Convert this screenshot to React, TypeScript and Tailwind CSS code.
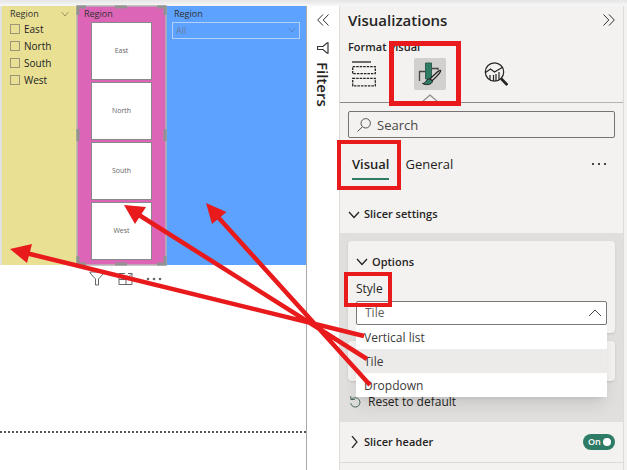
import React from "react";

const regions = ["East", "North", "South", "West"];
const styles = ["Vertical list", "Tile", "Dropdown"];

type StrokeProps = { className: string; points: string; box?: string; width?: number };

function Stroke({ className, points, box = "0 0 12 12", width = 1 }: StrokeProps) {
  return (
    <svg className={className} viewBox={box} fill="none" stroke="currentColor" strokeWidth={width} aria-hidden="true">
      <polyline points={points} />
    </svg>
  );
}

function Highlight({ className }: { className: string }) {
  return <span aria-hidden="true" className={`pointer-events-none absolute z-20 border-[#e81a1c] ${className}`} />;
}

function DoubleChevron({ flip = false }: { flip?: boolean }) {
  return (
    <svg className={flip ? "h-3 w-3 rotate-180" : "h-3 w-3"} viewBox="0 0 12 12" fill="none" stroke="#333" aria-hidden="true">
      <path d="M6 .5.7 6 6 11.500M11.500.5 6.200 6l5.300 5.500" />
    </svg>
  );
}

function SelectionHandles() {
  return (
    <svg className="pointer-events-none absolute -inset-px h-[261px] w-[91px]" viewBox="0 0 91 261" fill="none" aria-hidden="true">
      <rect x="1" y="1" width="89" height="259" stroke="#b4b4b4" strokeWidth="1.500" />
      <path
        d="M2 10V2h8M39 2h12M81 2h8v8M2 124v12M89 124v12M2 251v8h8M39 259h12M81 259h8v-8"
        stroke="#929292"
        strokeWidth="3"
      />
    </svg>
  );
}

function Canvas() {
  return (
    <main className="min-w-0 flex-1 border-r border-[#a9a9a9] bg-white">
      <div className="flex h-[259px] border-l-2 border-[#e1e1e1] text-[9px] text-[#303030]">
        <div role="group" aria-labelledby="region-list" className="w-[75px] shrink-0 bg-[#e9e094] pl-2">
          <div className="flex h-[14px] items-center justify-between pr-2 pt-0.5">
            <span id="region-list">Region</span>
            <Stroke className="h-2 w-2 text-[#77714a]" points="1,3 6,9 11,3" />
          </div>
          {regions.map((name) => (
            <label key={name} className="flex h-[17px] items-center gap-1 text-[10px] leading-4 text-[#222]">
              <input type="checkbox" className="h-[10px] w-[10px] appearance-none border border-[#99967a]" />
              {name}
            </label>
          ))}
        </div>
        <section className="relative w-[89px] shrink-0 bg-[#dd65b7] px-[14px]">
          <h2 className="-ml-[7px] h-4 leading-4">Region</h2>
          <div className="flex flex-col gap-0.5">
            {regions.map((name) => (
              <button
                key={name}
                type="button"
                className="flex h-[58px] w-full items-center justify-center border border-[#898989] bg-white text-[7px] text-[#666]"
              >
                {name}
              </button>
            ))}
          </div>
          <SelectionHandles />
        </section>
        <section className="min-w-0 flex-1 bg-[#5da2ff] px-1.5">
          <label htmlFor="region-drop" className="ml-0.5 block h-4 leading-4">
            Region
          </label>
          <div className="relative">
            <select
              id="region-drop"
              className="block h-[17px] w-full appearance-none border border-[#b4d1fb] px-[3px] text-[9px] leading-[15px] text-[#667da3]"
            >
              <option>All</option>
            </select>
            <Stroke className="absolute right-1 top-1 h-2 w-2 text-[#4f76ac]" points="1,3 6,9 11,3" />
          </div>
        </section>
      </div>
      <div className="flex h-[27px] items-center gap-[13px] pl-[89px] text-[#666]">
        <svg className="h-[15px] w-4" viewBox="0 0 16 15" fill="none" stroke="currentColor" aria-hidden="true">
          <path d="M1 1h14v1L9.500 8v6h-3V8L1 2z" />
        </svg>
        <svg className="h-[14px] w-[15px]" viewBox="0 0 15 14" fill="none" stroke="currentColor" aria-hidden="true">
          <path d="M7 1.500H1v11h13V8M1 7.500h7v5M10 1.500h4v4M14 1.500 9 6.500M9 3.500v3h3" />
        </svg>
        <svg className="h-1 w-4" viewBox="0 0 16 4" fill="currentColor" aria-hidden="true">
          <circle cx="2" cy="2" r="1.300" />
          <circle cx="8" cy="2" r="1.300" />
          <circle cx="14" cy="2" r="1.300" />
        </svg>
      </div>
      <div className="mt-[139px] border-t-2 border-dotted border-[#555]" />
    </main>
  );
}

function FiltersPane() {
  return (
    <aside className="flex w-8 shrink-0 flex-col items-center bg-white pt-2">
      <button type="button" aria-label="Expand filters">
        <DoubleChevron />
      </button>
      <svg className="mt-4 h-3 w-3 rotate-90" viewBox="0 0 12 12" fill="none" stroke="#333" strokeWidth="1.200" aria-hidden="true">
        <path d="M.8 1h10.400v.8L7.500 6v5.500h-3V6L.8 1.800z" />
      </svg>
      <h2 className="mt-2 text-[15px] font-semibold leading-5 text-[#252423] [writing-mode:vertical-rl]">Filters</h2>
    </aside>
  );
}

function BuildIcon() {
  return (
    <svg className="h-[26px] w-6" viewBox="0 0 24 26" fill="none" stroke="#252423" strokeWidth="1.300" aria-hidden="true">
      <path d="M0 1h19" />
      <path d="M.7 5.700h22.600v7H.7zM.7 17.300h22.600v7.500H.7z" strokeDasharray="2.500 1" />
    </svg>
  );
}

function FormatIcon() {
  return (
    <svg className="h-6 w-6" viewBox="0 0 24 24" fill="none" aria-hidden="true">
      <path d="M1.500 19V9.500H7M14 6.500h6V8" stroke="#444" strokeWidth="1.300" />
      <path d="M7.500 1h6v16h-6z" fill="#2f7c66" stroke="#315e50" />
      <path d="M22.500 8.500c-1.500-.4-8.500 6-10.500 8.500l2 1.800c2.500-2 9.500-9 8.500-10.300z" fill="#d2d0ce" stroke="#252423" strokeWidth="1.300" />
      <path d="M12 17c-3-.5-3.500 1.500-4.500 3-.7 1-2 1.300-3 1.500 3 2 9.500 1.500 10-2.300z" fill="#2f7c66" stroke="#252423" />
    </svg>
  );
}

function AnalyticsIcon() {
  return (
    <svg className="h-6 w-6" viewBox="0 0 24 24" fill="none" stroke="#252423" strokeWidth="1.200" aria-hidden="true">
      <circle cx="10.500" cy="10" r="9.200" />
      <path d="m1.500 10.500 5-3.500 4 3L19 5M6 18v-5M9.500 19v-6M12 19v-7M15 18v-8" />
      <path d="m17 16.500 6.300 6.500" strokeWidth="2.600" />
    </svg>
  );
}

function StyleSelect() {
  return (
    <div className="relative z-10">
      <select
        id="slicer-style"
        defaultValue="Tile"
        className="block h-6 w-full appearance-none rounded-xs border border-[#7a7876] bg-white px-2 text-[12px] leading-[22px] text-[#605e5c]"
      >
        {styles.map((name) => (
          <option key={name}>{name}</option>
        ))}
      </select>
      <Stroke className="absolute right-1.5 top-1.5 h-3 w-3 text-[#444]" points="0,9 6,3 12,9" />
      <ul role="listbox" aria-label="Style" className="absolute inset-x-0 top-full bg-white text-[12px] leading-[26px] text-[#3b3a39] shadow-lg">
        {styles.map((name) => (
          <li
            key={name}
            role="option"
            aria-selected={name === "Tile"}
            className={name === "Tile" ? "h-6 bg-[#edebe9] px-2" : "h-6 px-2"}
          >
            {name}
          </li>
        ))}
      </ul>
    </div>
  );
}

function VisualizationsPane() {
  return (
    <aside className="w-[285px] shrink-0 border-x border-[#dcdbd9] bg-[#f3f2f1] text-[12px] text-[#252423]">
      <header className="flex h-7 items-center justify-between px-2">
        <h1 className="text-[15px] font-semibold leading-5">Visualizations</h1>
        <button type="button" aria-label="Collapse visualizations">
          <DoubleChevron flip />
        </button>
      </header>
      <h2 className="h-6 pl-2 text-[11px] font-semibold leading-[26px]">Format visual</h2>
      <div className="relative flex h-[45px] border-b border-[#b5b3b1] pl-2">
        <span className="absolute -bottom-px left-0 w-[180px] border-b border-[#888]" />
        <div className="flex items-start gap-[38px] pl-1">
          <button type="button" aria-label="Build visual" className="flex h-8 w-6 shrink-0 items-center">
            <BuildIcon />
          </button>
          <button type="button" aria-label="Format visual" className="relative flex h-8 w-8 shrink-0 items-center justify-center rounded-xs bg-[#d2d0ce]">
            <FormatIcon />
            <Stroke className="absolute left-2 top-[36px] h-2 w-4 text-[#888]" box="0 0 16 8" points="0,8 8,1 16,8" width={1.2} />
            <Highlight className="-left-[25px] -top-[17px] h-[65px] w-[72px] border-[5px]" />
          </button>
          <button type="button" aria-label="Analytics" className="flex h-8 w-6 shrink-0 items-center">
            <AnalyticsIcon />
          </button>
        </div>
      </div>
      <div className="px-2 pt-2">
        <label className="flex h-[27px] items-center gap-1.5 rounded-xs border border-[#777573] px-2">
          <svg className="h-[14px] w-[14px] shrink-0" viewBox="0 0 14 14" fill="none" stroke="#555" aria-hidden="true">
            <circle cx="8.700" cy="5.300" r="4.700" />
            <path d="M5.500 8.700.5 13.500" />
          </svg>
          <input type="text" aria-label="Search" placeholder="Search" className="min-w-0 flex-1 text-[13px] leading-5 outline-none placeholder:text-[#484644]" />
        </label>
      </div>
      <nav className="mb-1.5 flex h-[52px] items-center gap-4 pl-3 pr-4 text-[13px] leading-5">
        <button type="button" className="relative border-b-2 border-[#2f7c66] pb-1 pt-1.5 font-semibold">
          Visual
          <Highlight className="-left-[15px] -top-2 h-[50px] w-16 border-[4px]" />
        </button>
        <button type="button">General</button>
        <button type="button" aria-label="More options" className="ml-auto">
          <svg className="h-1 w-4" viewBox="0 0 16 4" fill="#444" aria-hidden="true">
            <path d="M1 1h2v2H1zM7 1h2v2H7zM13 1h2v2h-2z" />
          </svg>
        </button>
      </nav>
      <h3 className="flex h-[37px] items-center gap-1 pl-2 text-[11px] font-semibold">
        <Stroke className="h-3 w-3" points="1,3 6,8.500 11,3" width={1.3} />
        Slicer settings
      </h3>
      <section className="bg-[#e1dfdd] px-2 pt-2">
        <div className="h-[92px] rounded-sm bg-[#f3f2f1] px-2 pt-2 shadow-sm">
          <h4 className="flex h-[26px] items-center gap-1 text-[11px] font-semibold">
            <Stroke className="h-3 w-3" points="1,3 6,8.500 11,3" width={1.3} />
            Options
          </h4>
          <div className="relative h-[26px]">
            <label htmlFor="slicer-style" className="leading-[28px]">
              Style
            </label>
            <Highlight className="-left-3 -top-[3px] h-[35px] w-12 border-[4px]" />
          </div>
          <StyleSelect />
        </div>
        <div className="mt-2 h-10 rounded-sm bg-[#f3f2f1] shadow-sm" />
        <button type="button" className="flex h-[41px] items-center gap-1.5 pl-0.5">
          <svg className="h-3 w-3" viewBox="0 0 12 12" fill="none" stroke="#47695e" aria-hidden="true">
            <path d="M.8 0v3.500h4M1 3.300C3 1.500 5.500 1.500 7.500 2.200a4.700 4.700 0 1 1-6.800 5" />
          </svg>
          Reset to default
        </button>
      </section>
      <div className="flex h-[41px] items-center gap-1 border-b border-[#dcdbd9] px-2 text-[11px] font-semibold">
        <Stroke className="h-3 w-3" points="4,0 9,6 4,12" width={1.2} />
        <h3 id="slicer-header">Slicer header</h3>
        <label className="relative ml-auto flex h-4 w-8 items-center rounded-full bg-[#2f7c66] pl-[5px] text-[9px] leading-4 text-white">
          <input type="checkbox" role="switch" aria-labelledby="slicer-header" defaultChecked className="absolute inset-0 appearance-none" />
          On
          <span className="absolute right-1 top-1 h-2 w-2 rounded-full bg-white" />
        </label>
      </div>
    </aside>
  );
}

function Arrows() {
  return (
    <svg className="pointer-events-none absolute left-0 top-0 z-30 h-[470px] w-[627px]" viewBox="0 0 627 470" fill="#e81a1c" stroke="#e81a1c" aria-hidden="true">
      <path d="M364 336 28 253.500M367 359 139 215M370 385 217 216" strokeWidth="4.500" fill="none" />
      <path d="m10 249 22-5-5 19zM124 205l22 2-11 17zM206 203l20.500 9-14.500 12z" stroke="none" />
    </svg>
  );
}

export default function App() {
  return (
    <div className="relative min-h-screen overflow-hidden bg-white font-['Open_Sans','Noto_Sans',sans-serif]">
      <div className="h-1.5 bg-linear-to-b from-[#e5e5e5] to-[#f8f8f8]" />
      <div className="flex min-h-[464px]">
        <Canvas />
        <FiltersPane />
        <VisualizationsPane />
        <div className="w-[3px] shrink-0 bg-[#f3f2f1]" />
      </div>
      <Arrows />
    </div>
  );
}
